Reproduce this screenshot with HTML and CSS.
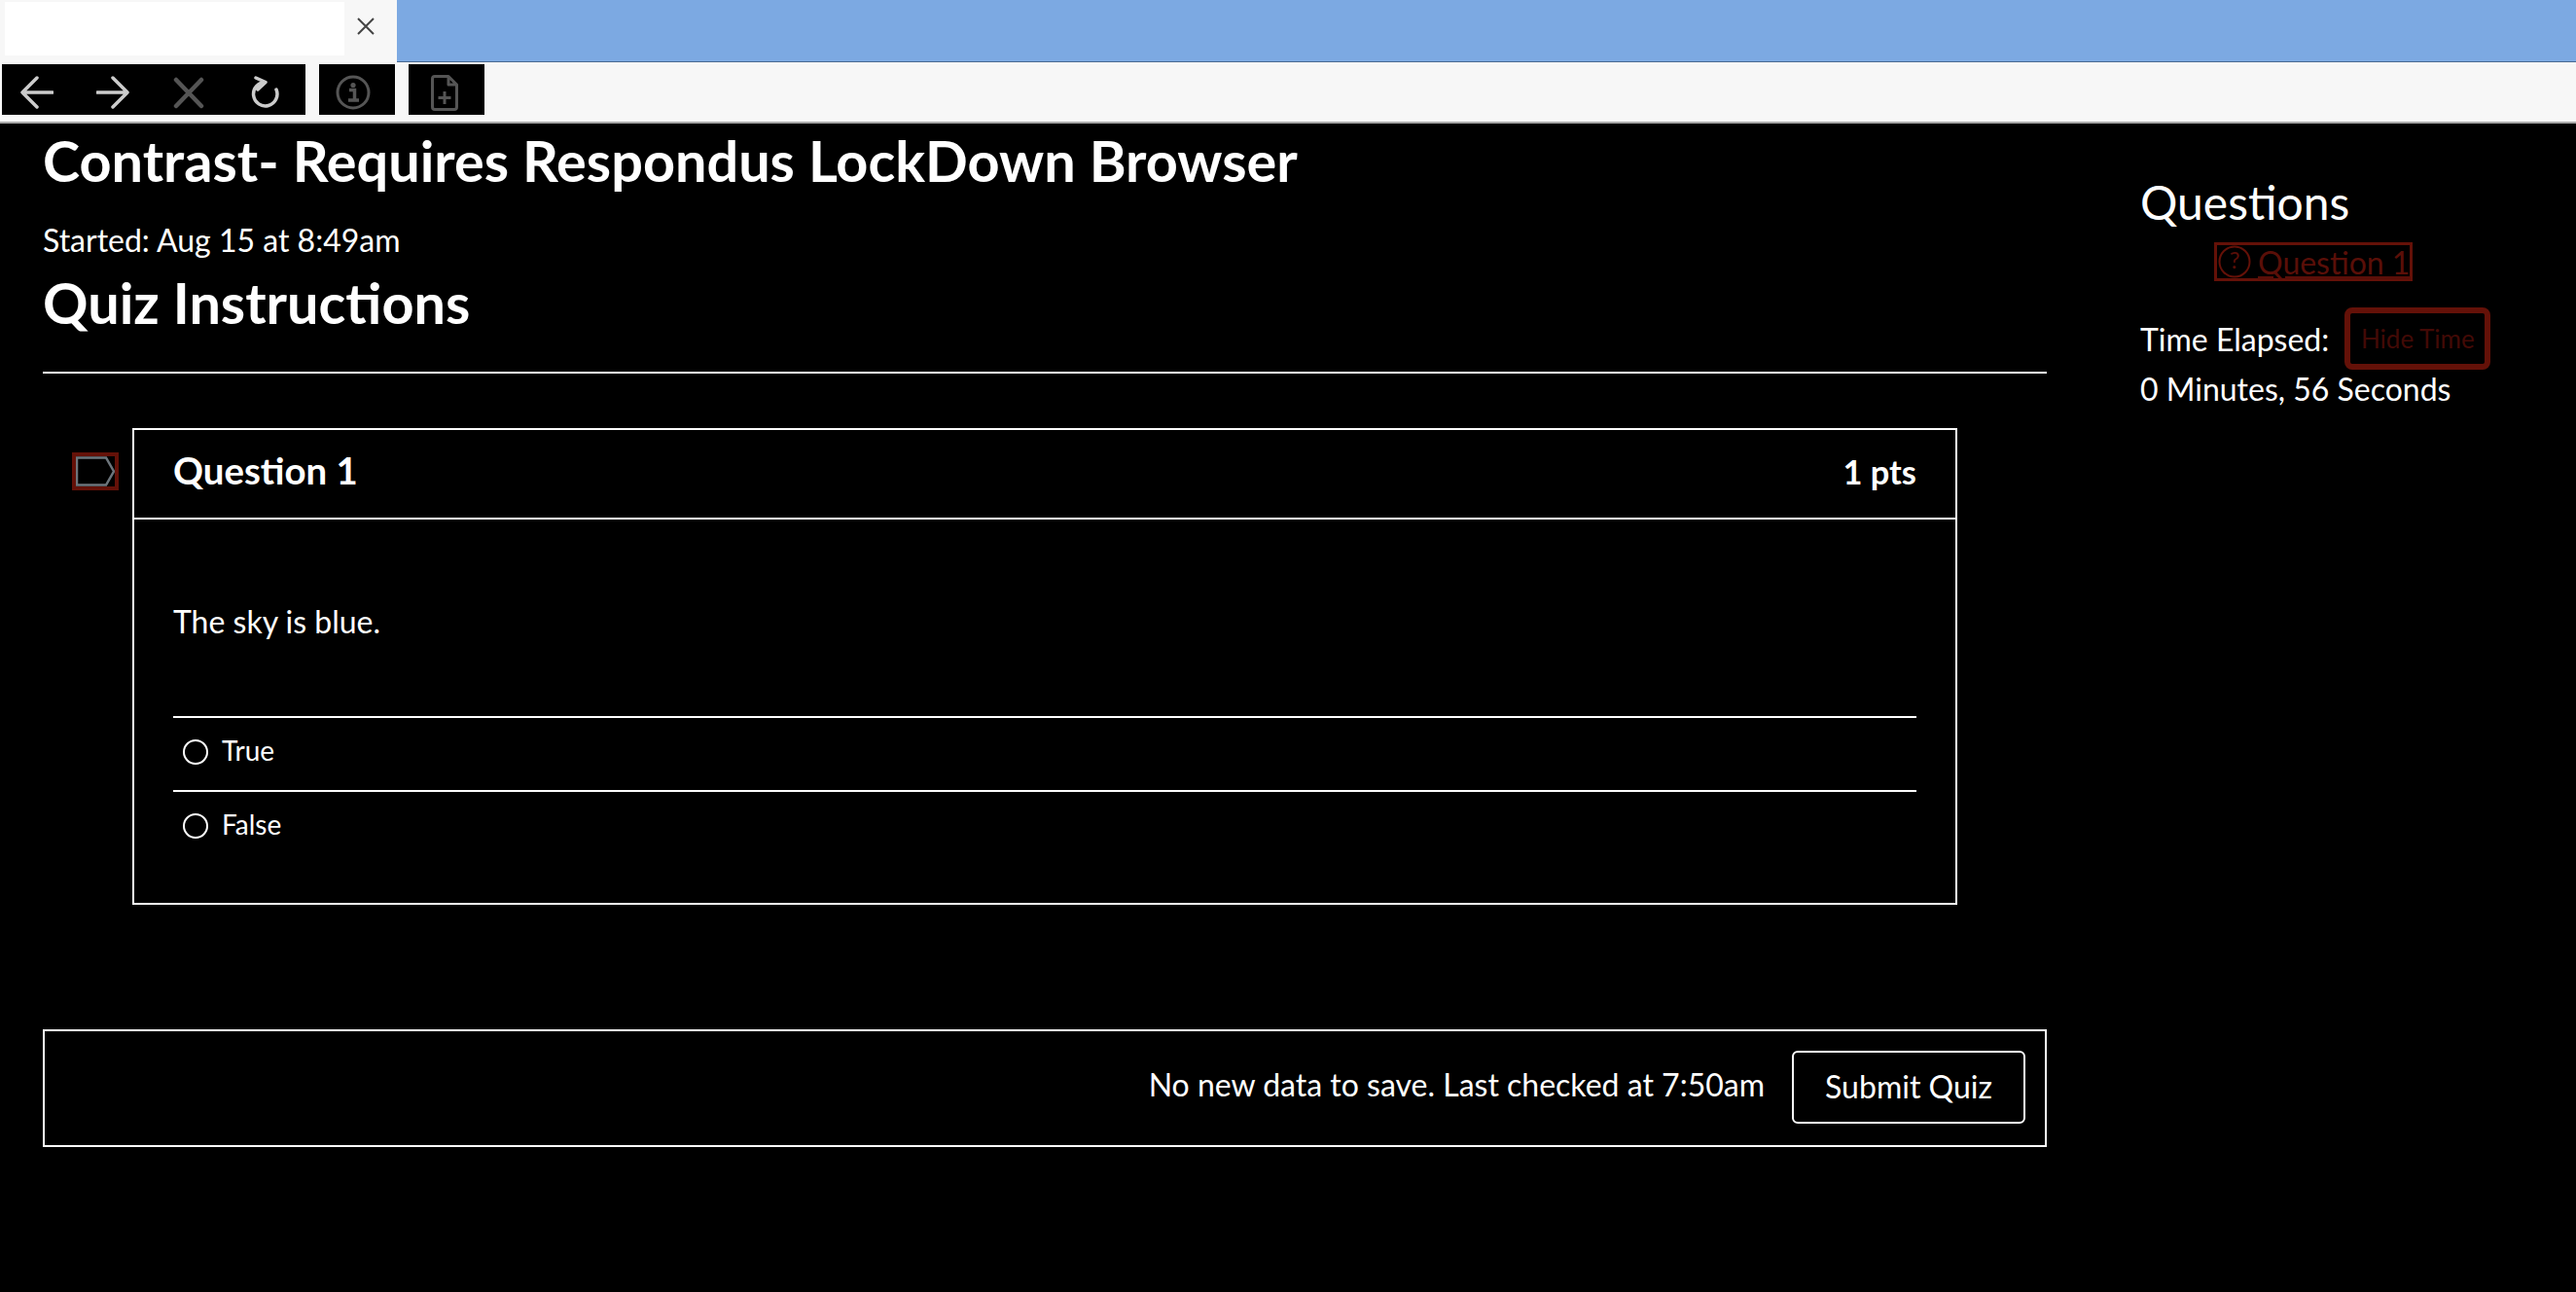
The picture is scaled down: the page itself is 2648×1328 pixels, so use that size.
FILE: index.html
```html
<!DOCTYPE html>
<html lang="en">
<head>
    <meta charset="UTF-8">
    <title>Contrast- Requires Respondus LockDown Browser</title>
    <link rel="stylesheet" href="styles.css">
</head>
<body>
<div class="tabstrip">
    <div class="tab">
        <div class="tab-page"></div>
        <svg class="tab-close" width="20" height="20" viewBox="0 0 20 20"><path d="M2 2 L18 18 M18 2 L2 18" stroke="#444" stroke-width="2" fill="none"/></svg>
    </div>
    <div class="tab-rest"></div>
</div>
<div class="toolbar">
    <div class="tool-group nav-group">
        <svg width="34" height="34" viewBox="0 0 34 34"><path d="M33 17 H2 M17 2 L2 17 L17 32" stroke="#ccc" stroke-width="3.5" stroke-linecap="round" stroke-linejoin="round" fill="none"/></svg>
        <svg width="34" height="34" viewBox="0 0 34 34"><path d="M1 17 H32 M17 2 L32 17 L17 32" stroke="#ccc" stroke-width="3.5" stroke-linecap="round" stroke-linejoin="round" fill="none"/></svg>
        <svg width="34" height="34" viewBox="0 0 34 34"><path d="M4 4 L30 31 M30 4 L4 31" stroke="#555" stroke-width="4.5" stroke-linecap="round" fill="none"/></svg>
        <svg width="34" height="34" viewBox="-3 0 34 34"><path d="M14.7 6.5 A12.2 12.2 0 1 0 26 14 M5 2 L15 6.5 L7 14" stroke="#ccc" stroke-width="3.5" stroke-linecap="round" stroke-linejoin="round" fill="none"/></svg>
    </div>
    <div class="tool-group info-group">
        <svg width="36" height="36" viewBox="0 0 36 36"><circle cx="18" cy="18" r="16" stroke="#555" stroke-width="3" fill="none"/><circle cx="18" cy="10.5" r="2.6" fill="#555"/><path d="M14 15.5 H19.5 V25 M13 26 H24" stroke="#555" stroke-width="3.5" fill="none"/></svg>
    </div>
    <div class="tool-group doc-group">
        <svg width="28" height="37" viewBox="0 0 28 37"><path d="M4 1.5 H18 L26.5 10 V33 Q26.5 35.5 24 35.5 H4 Q1.5 35.5 1.5 33 V4 Q1.5 1.5 4 1.5 Z M18 1.5 V10 H26.5" stroke="#555" stroke-width="3" stroke-linejoin="round" fill="none"/><path d="M14 17 V30 M7.5 23.5 H20.5" stroke="#555" stroke-width="3" fill="none"/></svg>
    </div>
</div>
<div class="page">
    <main class="content">
        <h1 class="quiz-title">Contrast- Requires Respondus LockDown Browser</h1>
        <p class="started">Started: Aug 15 at 8:49am</p>
        <h2 class="instructions">Quiz Instructions</h2>
        <hr class="rule">
        <div class="question-row">
            <div class="flag">
                <div class="flag-box">
                    <svg width="40" height="31" viewBox="0 0 40 31"><path d="M1 1.5 H31 L39 15.5 L31 29.5 H1 Z" stroke="#6d757c" stroke-width="2.5" fill="none"/></svg>
                </div>
            </div>
            <section class="question">
                <header class="question-head">
                    <span class="question-name">Question 1</span>
                    <span class="pts">1 pts</span>
                </header>
                <div class="question-body">
                    <p class="question-text">The sky is blue.</p>
                    <div class="answer"><span class="radio"></span>True</div>
                    <div class="answer"><span class="radio"></span>False</div>
                </div>
            </section>
        </div>
        <div class="save-bar">
            <span class="save-msg">No new data to save. Last checked at 7:50am</span>
            <button class="submit">Submit Quiz</button>
        </div>
    </main>
    <aside class="sidebar">
        <h3 class="side-title">Questions</h3>
        <a class="side-link">
            <svg width="34" height="34" viewBox="0 0 34 34"><circle cx="17" cy="17" r="15.5" stroke="#641108" stroke-width="2" fill="none"/><text x="17" y="24" text-anchor="middle" class="qmark">?</text></svg>
            <span>Question 1</span>
        </a>
        <div class="time-row">
            <span>Time Elapsed:</span>
            <button class="hide-time">Hide Time</button>
        </div>
        <div class="time-val">0 Minutes, 56 Seconds</div>
    </aside>
</div>
</body>
</html>
```

FILE: styles.css
```css
* {
    margin: 0;
    padding: 0;
    box-sizing: border-box;
}

body {
    background-color: #000;
    color: #fff;
    font-family: Lato, "Liberation Sans", sans-serif;
    height: 1328px;
    overflow: hidden;
}

/*---------- browser chrome ----------*/
.tabstrip {
    display: flex;
    height: 64px;
    background-color: #f7f7f7;
}

.tab {
    width: 408px;
    display: flex;
    align-items: flex-start;
    padding: 2px 0 0 5px;
}

.tab-page {
    width: 349px;
    height: 55px;
    background-color: #fff;
}

.tab-close {
    margin: 15px 0 0 12px;
}

.tab-rest {
    flex: 1;
    background-color: #7ca9e2;
    border-bottom: 1px solid #4a6a92;
}

.toolbar {
    display: flex;
    gap: 14px;
    height: 63px;
    padding: 2px 0 0 2px;
    background-color: #f7f7f7;
    border-bottom: 2px solid #a9a9a9;
}

.tool-group {
    width: 78px;
    height: 52px;
    background-color: #000;
    display: flex;
    align-items: center;
    justify-content: center;
    padding-top: 6px;
}

.nav-group {
    width: 312px;
    justify-content: flex-start;
    gap: 44px;
    padding-left: 19px;
}

.info-group {
    padding-right: 8px;
}

.doc-group {
    padding-right: 4px;
}

/*---------- page ----------*/
.page {
    display: flex;
}

.content {
    width: 2060px;
    margin-left: 44px;
}

.quiz-title {
    font-size: 57.6px;
    line-height: 70px;
    font-weight: 700;
    margin-top: 3px;
}

.started {
    font-size: 32px;
    line-height: 40px;
    margin-top: 27px;
}

.instructions {
    font-size: 57.6px;
    line-height: 70px;
    font-weight: 700;
    margin-top: 9px;
}

.rule {
    border: 0;
    border-top: 2px solid #fff;
    margin-top: 36px;
}

.question-row {
    display: flex;
    margin-top: 56px;
}

.flag {
    width: 92px;
    padding: 25px 0 0 30px;
}

.flag-box {
    width: 48px;
    height: 39px;
    border: 4px solid #641108;
}

.flag-box svg {
    display: block;
}

.question {
    width: 1876px;
    height: 490px;
    border: 2px solid #fff;
}

.question-head {
    display: flex;
    justify-content: space-between;
    align-items: center;
    height: 92px;
    padding: 0 40px;
    border-bottom: 2px solid #fff;
    font-size: 38.4px;
    font-weight: 700;
}

.question-name {
    padding-bottom: 8px;
}

.pts {
    font-size: 34.4px;
    padding-bottom: 5px;
}

.question-body {
    padding: 0 40px;
}

.question-text {
    font-size: 32px;
    line-height: 40px;
    padding: 85px 0 77px;
}

.answer {
    display: flex;
    align-items: center;
    height: 76px;
    padding: 0 0 8px 10px;
    border-top: 2px solid #fff;
    font-size: 28px;
}

.radio {
    width: 26px;
    height: 26px;
    border: 2px solid #fff;
    border-radius: 50%;
    margin: 4px 14px 0 0;
}

.save-bar {
    display: flex;
    justify-content: flex-end;
    align-items: center;
    gap: 28px;
    height: 121px;
    margin-top: 128px;
    padding-right: 20px;
    border: 2px solid #fff;
}

.save-msg {
    font-size: 32px;
    padding-bottom: 8px;
}

.submit {
    width: 240px;
    height: 75px;
    margin-bottom: 2px;
    padding-bottom: 3px;
    background-color: #000;
    color: #fff;
    border: 2px solid #fff;
    border-radius: 6px;
    font-family: inherit;
    font-size: 32px;
}

/*---------- sidebar ----------*/
.sidebar {
    margin-left: 96px;
    padding-top: 51px;
}

.side-title {
    font-size: 48px;
    line-height: 60px;
    font-weight: 400;
}

.side-link {
    display: inline-flex;
    align-items: center;
    gap: 7px;
    height: 40px;
    margin: 11px 0 0 76px;
    padding-left: 1px;
    border: 3px solid #641108;
    color: #5a0f08;
    font-size: 32px;
    text-decoration: underline;
    text-decoration-thickness: 3px;
}

.qmark {
    font-size: 24px;
    fill: #5a0f08;
}

.time-row {
    display: flex;
    align-items: center;
    gap: 16px;
    margin-top: 27px;
    font-size: 32px;
}

.hide-time {
    width: 150px;
    height: 64px;
    background-color: #000;
    color: #430a06;
    border: 6px solid #641108;
    border-radius: 8px;
    font-family: inherit;
    font-size: 26px;
}

.time-val {
    font-size: 32px;
    line-height: 40px;
}
```
